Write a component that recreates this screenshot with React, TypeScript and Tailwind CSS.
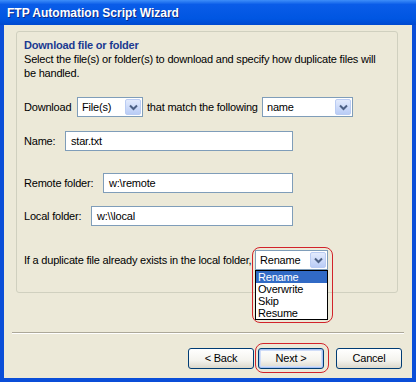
import React from "react";

function ComboArrow() {
  return (
    <span className="flex h-[16px] w-[16px] items-center justify-center rounded-[2px] border border-[#BACCF3] bg-[linear-gradient(to_bottom,#E3EBFD,#B9CCF6)]">
      <svg width="9" height="7" viewBox="0 0 9 7">
        <path d="M1 1.5 L4.5 5 L8 1.5" fill="none" stroke="#4D6185" strokeWidth="2" />
      </svg>
    </span>
  );
}

function Combo({ value, width }: { value: string; width: string }) {
  return (
    <div
      className={`flex h-[20px] items-center justify-between border border-[#7F9DB9] bg-white pl-[4px] pr-[1px] ${width}`}
    >
      <span>{value}</span>
      <ComboArrow />
    </div>
  );
}

function TextBox({ value, width }: { value: string; width: string }) {
  return (
    <div className={`flex h-[20px] items-center border border-[#7F9DB9] bg-white pl-[5px] ${width}`}>
      {value}
    </div>
  );
}

function Button({ label, isDefault }: { label: string; isDefault?: boolean }) {
  return (
    <div
      className={`flex h-[21px] w-[66px] items-center justify-center rounded-[3px] border border-[#003C74] bg-[linear-gradient(to_bottom,#FFFFFF,#F4F3EE_60%,#DCD8CC)] ${
        isDefault ? "shadow-[inset_0_0_0_1px_#A9C4F5,inset_0_0_0_2px_#D0DDF8]" : ""
      }`}
    >
      {label}
    </div>
  );
}

export default function App() {
  const options = ["Rename", "Overwrite", "Skip", "Resume"];
  return (
    <div className="flex h-[382px] w-[416px] flex-col bg-[#0A4ED8] font-['Liberation_Sans',Arial,sans-serif] text-[11px] tracking-[-0.2px] text-black">
      {/* title bar */}
      <div className="flex h-[25px] items-center bg-[linear-gradient(to_bottom,#3E8EF9_0%,#0A5CE8_18%,#0056E2_75%,#0049CF_100%)] pl-[7px] pt-[1px]">
        <span className="text-[12px] font-bold tracking-normal text-white [text-shadow:1px_1px_0_#0F2A86]">
          FTP Automation Script Wizard
        </span>
      </div>

      {/* client area */}
      <div className="mx-[4px] mb-[4px] flex flex-1 flex-col bg-[#ECE9D8]">
        {/* group box */}
        <div className="ml-[12px] mr-[14px] mt-[6px] flex h-[262px] flex-col rounded-[3px] border border-[#D0D0BF] pl-[7px] pt-[6px]">
          <div className="h-[14px] leading-[14px] font-bold text-[#1B3A91]">Download file or folder</div>
          <div className="leading-[14px] whitespace-nowrap">
            Select the file(s) or folder(s) to download and specify how duplicate files will
            <br />
            be handled.
          </div>

          <div className="mt-[17px] flex items-center">
            <span className="w-[53px]">Download</span>
            <Combo value="File(s)" width="w-[66px]" />
            <span className="w-[119px] pl-[4px] whitespace-nowrap">that match the following</span>
            <Combo value="name" width="w-[91px]" />
          </div>

          <div className="mt-[14px] flex items-center">
            <span className="w-[41px]">Name:</span>
            <TextBox value="star.txt" width="w-[228px]" />
          </div>

          <div className="mt-[22px] flex items-center">
            <span className="w-[79px]">Remote folder:</span>
            <TextBox value="w:\remote" width="w-[190px]" />
          </div>

          <div className="mt-[13px] flex items-center">
            <span className="w-[67px]">Local folder:</span>
            <TextBox value="w:\\local" width="w-[202px]" />
          </div>

          <div className="mt-[24px] flex items-center">
            <span className="w-[231px] whitespace-nowrap">If a duplicate file already exists in the local folder,</span>
            <div className="relative">
              <Combo value="Rename" width="w-[73px]" />
              <div className="absolute left-0 top-[20px] z-10 w-[73px] border border-black bg-white">
                {options.map((o, i) => (
                  <div
                    key={o}
                    className={`h-[12px] pl-[2px] leading-[12px] ${i === 0 ? "bg-[#316AC5] text-white" : ""}`}
                  >
                    {o}
                  </div>
                ))}
              </div>
              <div className="pointer-events-none absolute -left-[3px] -right-[5px] -top-[3px] z-20 h-[76px] rounded-[8px] border border-[#D2232A]" />
            </div>
          </div>
        </div>

        {/* separator */}
        <div className="mx-[8px] mt-[39px] h-[2px] border-b border-t border-[#ACA899] border-b-white" />

        {/* buttons */}
        <div className="mr-[10px] mt-[14px] flex justify-end">
          <Button label="< Back" />
          <div className="relative ml-[4px]">
            <Button label="Next >" isDefault />
            <div className="pointer-events-none absolute -bottom-[4px] -left-[3px] -right-[5px] -top-[5px] rounded-[8px] border border-[#D2232A]" />
          </div>
          <div className="ml-[12px]">
            <Button label="Cancel" />
          </div>
        </div>
      </div>
    </div>
  );
}
